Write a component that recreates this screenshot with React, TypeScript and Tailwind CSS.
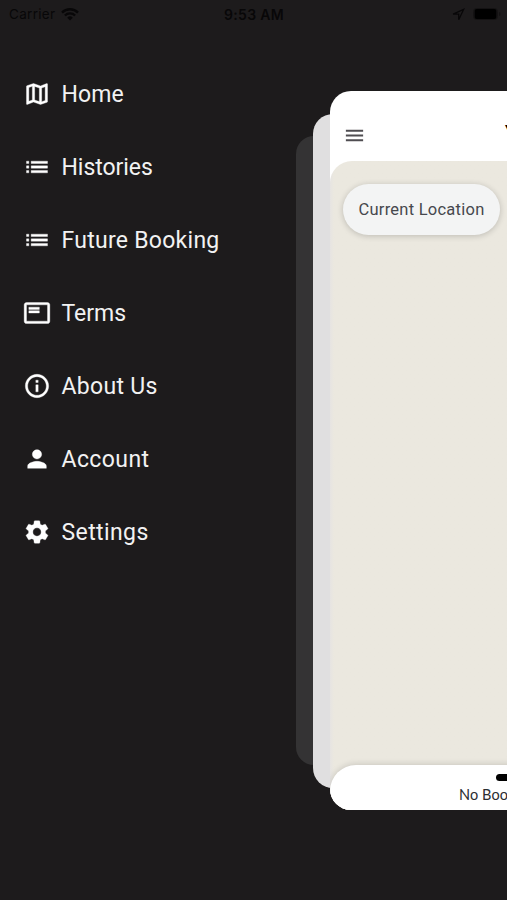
import { IconType } from "react-icons";
import {
  MdInfoOutline,
  MdList,
  MdMenu,
  MdOutlineFeaturedPlayList,
  MdOutlineMap,
  MdPerson,
  MdSettings,
} from "react-icons/md";

type MenuItem = {
  label: string;
  icon: IconType;
  spacing: string;
};

const MENU: MenuItem[] = [
  { label: "Home", icon: MdOutlineMap, spacing: "tracking-[0.1px]" },
  { label: "Histories", icon: MdList, spacing: "tracking-[-0.05px]" },
  { label: "Future Booking", icon: MdList, spacing: "tracking-[0.27px]" },
  { label: "Terms", icon: MdOutlineFeaturedPlayList, spacing: "tracking-[0px]" },
  { label: "About Us", icon: MdInfoOutline, spacing: "tracking-[0.3px]" },
  { label: "Account", icon: MdPerson, spacing: "tracking-[0.4px]" },
  { label: "Settings", icon: MdSettings, spacing: "tracking-[0.4px]" },
];

function StatusBar() {
  return (
    <header className="grid h-7 grid-cols-3 items-center pr-1.5 pl-[9px] font-['Inter',sans-serif] text-[13px] text-[#080708]">
      <div className="flex items-center gap-1.5">
        <span className="pt-px text-[13.5px] tracking-[0.3px]">Carrier</span>
        <svg width="18" height="13" viewBox="0 0 18 13" fill="none" stroke="currentColor" strokeWidth="2.4">
          <path d="M1 4.6a11.4 11.4 0 0 1 16 0M3.9 7.5a7.3 7.3 0 0 1 10.2 0" />
          <path d="M9 12.5 6.2 9.7a4 4 0 0 1 5.6 0Z" fill="currentColor" stroke="none" />
        </svg>
      </div>
      <span className="-ml-0.5 pt-px text-center text-[14px] font-semibold tracking-[0.35px]">9:53 AM</span>
      <div className="flex items-center justify-end gap-2">
        <svg width="13" height="13" viewBox="0 0 12 12" fill="none" stroke="currentColor" strokeWidth="1.2">
          <path d="M10.8 1.2 1 5.6h5.2v5.2Z" />
        </svg>
        <svg width="28" height="12" viewBox="0 0 28 12">
          <rect x="0.5" y="0.5" width="24" height="11" rx="3" fill="none" stroke="#141213" />
          <rect x="1.5" y="1" width="22" height="10" rx="2" fill="#000" />
          <path d="M26 4v4q1.5-.5 1.5-2T26 4" fill="#141213" />
        </svg>
      </div>
    </header>
  );
}

function SideMenu() {
  return (
    <nav className="w-[296px] shrink-0 pt-[29px] pl-[23px]">
      {MENU.map(({ label, icon: Icon, spacing }) => (
        <a key={label} className="flex h-[73.1px] items-center gap-[10.5px] text-white">
          <Icon size={28} className="shrink-0 [&_path:not([fill=none])]:stroke-[0.3px]" />
          <span className={`pt-[2px] text-[23px] leading-7 whitespace-nowrap text-[#f2f2f2] ${spacing}`}>{label}</span>
        </a>
      ))}
    </nav>
  );
}

function MapScreen() {
  return (
    <section className="z-10 col-start-1 row-start-1 mt-[63px] ml-[34px] flex h-[719px] w-[380px] flex-col overflow-hidden rounded-[21px] bg-white">
      <div className="flex h-[70px] shrink-0 items-center pt-[19px] pl-[13px]">
        <MdMenu size={23} className="text-[#4f4d51]" />
        <h1 className="-mt-1.5 ml-[139px] text-[20px] leading-6 font-bold text-black">Yatri</h1>
      </div>
      <div className="flex flex-1 flex-col rounded-tl-[22px] bg-[#ebe8df] bg-linear-to-r from-[#e6e4e2] to-[#ebe8df] to-[4px]">
        <button className="mt-[23px] ml-[13px] h-[51px] w-[157px] rounded-full bg-[#f3f4f4] pt-px text-[16.5px] tracking-[0.25px] text-[#46484d] shadow-[0_1px_6px_rgba(0,0,0,0.2)]">
          Current Location
        </button>
        <div className="mt-auto flex h-[45px] flex-col items-center rounded-t-[26px] bg-white pt-[9px] shadow-[0_-1px_6px_rgba(0,0,0,0.14)]">
          <span className="h-[7px] w-[48px] shrink-0 rounded-full bg-black" />
          <p className="mt-[5px] w-[122px] font-['Lato',sans-serif] text-[14.5px] leading-[18px] tracking-[0.1px] whitespace-nowrap text-[#2b2d31]">
            No Booking Found
          </p>
        </div>
      </div>
    </section>
  );
}

export default function App() {
  return (
    <div className="flex h-[900px] w-[507px] flex-col overflow-hidden bg-[#1d1b1c] font-['Roboto',sans-serif]">
      <StatusBar />
      <main className="flex min-h-0 flex-1">
        <SideMenu />
        {/* screens fanned out behind the open drawer */}
        <div className="grid min-w-0 flex-1 grid-cols-[420px] items-start">
          <div className="col-start-1 row-start-1 mt-[108px] h-[629px] rounded-[18px] bg-[#343334]" />
          <div className="col-start-1 row-start-1 mt-[86px] ml-[17px] h-[674px] rounded-[20px] bg-[#e0dfe0]" />
          <MapScreen />
        </div>
      </main>
    </div>
  );
}
